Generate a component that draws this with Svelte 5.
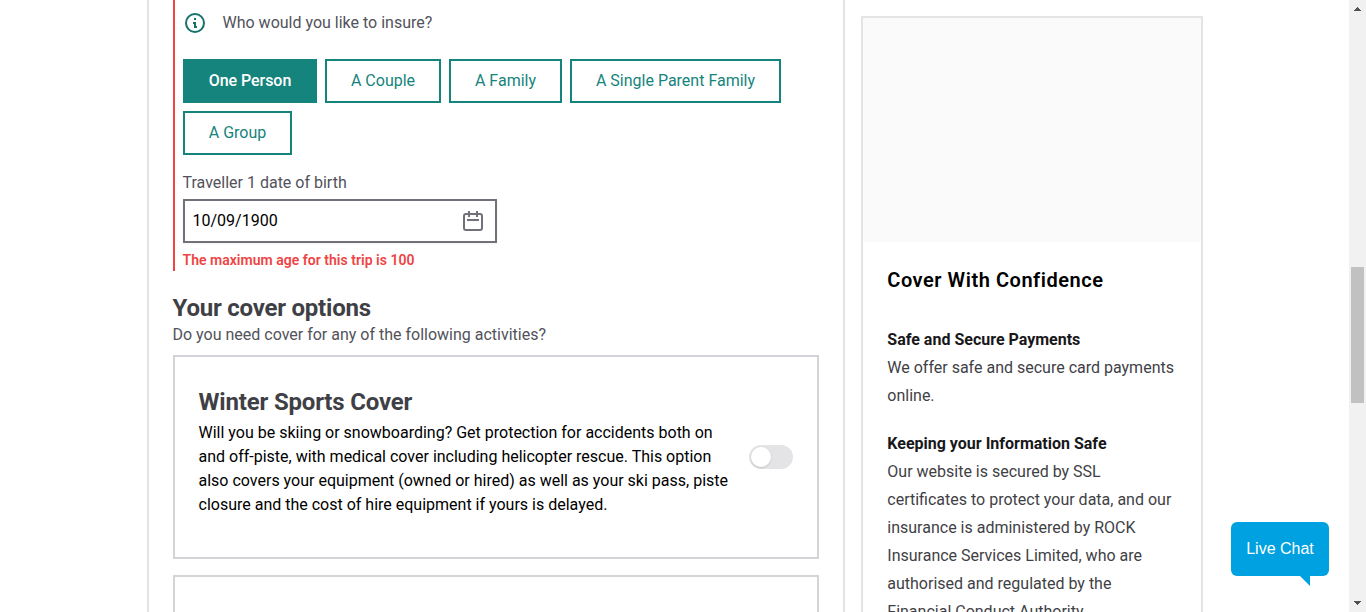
<script>
  const people = ['One Person', 'A Couple', 'A Family', 'A Single Parent Family', 'A Group'];
  const widths = [134, 116, 113, 211, 109];
  let selected = $state(0);
  let winter = $state(false);
  const winterLines = [
    'Will you be skiing or snowboarding? Get protection for accidents both on',
    'and off-piste, with medical cover including helicopter rescue. This option',
    'also covers your equipment (owned or hired) as well as your ski pass, piste',
    'closure and the cost of hire equipment if yours is delayed.'
  ];
  const safeLines = ['We offer safe and secure card payments', 'online.'];
  const infoLines = [
    'Our website is secured by SSL',
    'certificates to protect your data, and our',
    'insurance is administered by ROCK',
    'Insurance Services Limited, who are',
    'authorised and regulated by the',
    'Financial Conduct Authority.'
  ];
</script>

<div class="page">
  <main class="form">
    <section class="insure">
      <div class="question">
        <svg width="20" height="20" viewBox="0 0 20 20" fill="none">
          <circle cx="10" cy="10" r="9" stroke="#15716b" stroke-width="2" />
          <path d="M9 5h2v2H9zM8 9h3v4h1v2H9v-4H8z" fill="#15716b" />
        </svg>
        <span>Who would you like to insure?</span>
      </div>
      <div class="choices">
        {#each people as name, i}
          <button class:active={selected === i} style="width: {widths[i]}px" onclick={() => (selected = i)}>{name}</button>
        {/each}
      </div>
      <div class="label">Traveller 1 date of birth</div>
      <div class="date">
        <span>10/09/1900</span>
        <svg width="20" height="20" viewBox="0 0 20 20" fill="none" stroke="#71717a" stroke-width="2">
          <rect x="1" y="3" width="18" height="16" rx="2" />
          <path d="M6 0v6M14 0v6M4 9h12" />
        </svg>
      </div>
      <div class="error">The maximum age for this trip is 100</div>
    </section>
    <h2>Your cover options</h2>
    <p class="sub">Do you need cover for any of the following activities?</p>
    <section class="option">
      <div class="copy">
        <h3>Winter Sports Cover</h3>
        {#each winterLines as line}<p>{line}</p>{/each}
      </div>
      <button class="toggle" class:on={winter} aria-label="Winter Sports Cover" onclick={() => (winter = !winter)}><i></i></button>
    </section>
    <section class="option next"></section>
  </main>

  <aside>
    <div class="banner"></div>
    <div class="info">
      <h4>Cover With Confidence</h4>
      <h5>Safe and Secure Payments</h5>
      {#each safeLines as line}<p>{line}</p>{/each}
      <h5 class="second">Keeping your Information Safe</h5>
      {#each infoLines as line}<p>{line}</p>{/each}
    </div>
  </aside>

  <div class="scroll">
    <svg width="7" height="4" viewBox="0 0 7 4" shape-rendering="crispEdges"><path d="M3 0h1v1h1v1h1v1h1v1H0V3h1V2h1V1h1z" fill="#505050" /></svg>
    <div class="thumb"></div>
    <svg width="7" height="4" viewBox="0 0 7 4" shape-rendering="crispEdges"><path d="M0 0h7v1H6v1H5v1H4v1H3V3H2V2H1V1H0z" fill="#505050" /></svg>
  </div>

  <div class="chat">Live Chat</div>
</div>

<style>
  :global(body) { margin: 0; overflow: hidden; background: #fff; }
  .page {
    display: flex; position: relative; box-sizing: border-box;
    width: 1366px; height: 612px; padding-left: 146.5px; overflow: hidden;
    font: 16px/24px Roboto, sans-serif; color: #52525b;
  }
  h2, h3, h4, h5, p { margin: 0; }
  p, h2, h3, h4, h5, .label, .error, span { white-space: nowrap; }
  button { font: inherit; padding: 0; }
  .form {
    box-sizing: border-box; flex: none; width: 698px; height: 612px; padding: 0 24px;
    border: solid #e4e4e7; border-width: 0 2px; overflow: hidden;
  }
  .insure { box-sizing: border-box; height: 271px; padding: 10px 0 0 8px; border-left: 2px solid #ef4444; }
  .question { display: flex; align-items: center; height: 25px; padding-left: 2px; gap: 18px; }
  .question svg { margin-top: 1px; }
  .choices { display: flex; flex-wrap: wrap; gap: 8px; margin-top: 24px; }
  .choices button {
    box-sizing: border-box; height: 44px; padding: 0 0 1px 1px; border: 2px solid #15847c;
    background: #fff; color: #15847c; white-space: nowrap;
  }
  .choices .active { background: #15847c; color: #fff; font-weight: 500; letter-spacing: -.05px; }
  .label { margin-top: 16px; height: 28px; }
  .date {
    box-sizing: border-box; display: flex; justify-content: space-between; align-items: center;
    width: 314px; height: 44px; padding: 0 12px 0 8px; border: 2px solid #71717a; color: #000;
    box-shadow: 0 1px 2px rgba(0, 0, 0, .05);
  }
  .error { margin-top: 7px; font-size: 14px; line-height: 20px; font-weight: 600; letter-spacing: .02px; color: #ef4444; }
  h2, h3 { font-size: 24px; line-height: 32px; font-weight: 700; color: #3f3f46; }
  h2 { margin-top: 21px; letter-spacing: -.22px; }
  .sub { margin-top: -1px; }
  .option {
    box-sizing: border-box; display: flex; align-items: center; justify-content: space-between;
    height: 204px; margin-top: 8px; padding: 0 24px; border: 2px solid #d4d4d8;
  }
  .option.next { margin-top: 16px; }
  .copy { color: #000; margin-top: -12px; }
  .copy h3 { margin-bottom: 3px; letter-spacing: -.18px; }
  .toggle { width: 44px; height: 24px; border: 0; padding: 2px; border-radius: 12px; background: #e4e4e7; }
  .toggle i { display: block; width: 20px; height: 20px; border-radius: 50%; background: #fff; box-shadow: 0 1px 2px rgba(0, 0, 0, .15); }
  .toggle.on { background: #15847c; }
  .toggle.on i { margin-left: 20px; }
  aside { box-sizing: border-box; flex: none; width: 342px; height: 640px; margin: 16px 0 0 16.8px; border: 2px solid #e4e4e7; }
  .banner { height: 224px; background: #fafafa; }
  .info { padding: 24px; color: #3f3f46; line-height: 28px; }
  h4 { font-size: 20px; line-height: 28px; font-weight: 600; color: #000; letter-spacing: .54px; }
  h5 { margin-top: 32px; font-size: 16px; line-height: 28px; font-weight: 700; color: #18181b; }
  h5.second { margin-top: 20px; }
  .scroll {
    box-sizing: border-box; display: flex; flex-direction: column; align-items: center;
    width: 17px; height: 612px; margin-left: auto; padding: 7px 0 7px; background: #f1f1f1;
  }
  .thumb { width: 13px; height: 136px; margin: 256px 0 auto; background: #c1c1c1; }
  .chat {
    position: absolute; left: 1231px; top: 522px; width: 98px; height: 54px; border-radius: 6px;
    background: #00a1e0; color: #fff; font: 16px/53px "Liberation Sans", Arial, sans-serif; text-align: center;
  }
  .chat::after { content: ""; position: absolute; right: 19px; top: 54px; border: solid transparent; border-width: 0 0 10px 10px; border-right: 0; border-top: 10px solid #00a1e0; border-bottom: 0; }
</style>
